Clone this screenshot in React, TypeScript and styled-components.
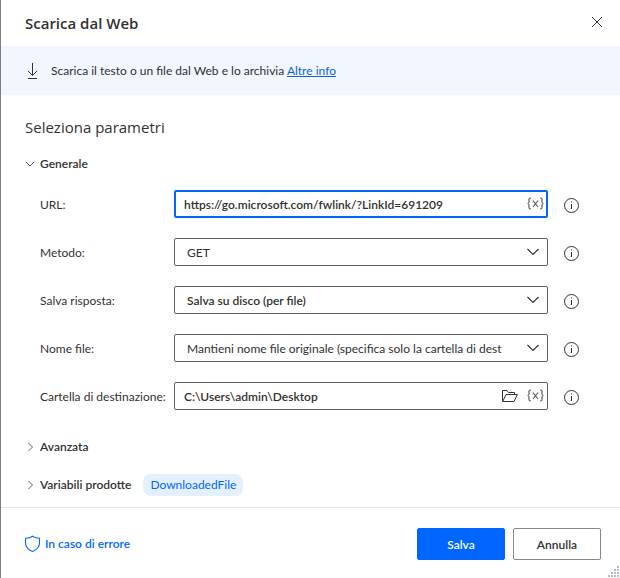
import React, { useState } from "react";
import styled, { createGlobalStyle, css } from "styled-components";

const colors = {
  text: "#323130",
  accent: "#0066ff",
  link: "#0f62e6",
  border: "#605e5c",
  banner: "#f1f6ff",
  pill: "#e5f0ff",
  divider: "#e6e6e6",
};

const headingFont = `"Open Sans", "Segoe UI", sans-serif`;

const GlobalStyle = createGlobalStyle`
  *, *::before, *::after { box-sizing: border-box; }
  body {
    margin: 0;
    background: #ffffff;
    color: ${colors.text};
    font: 12px/16px Lato, "Segoe UI", sans-serif;
  }
  button, input, select { font: inherit; color: inherit; }
`;

const Dialog = styled.main`
  position: relative;
  display: flex;
  flex-direction: column;
  min-height: 100vh;
  border-left: 1px solid #7f7f7f;
`;

const Header = styled.header`
  display: flex;
  align-items: center;
  justify-content: space-between;
  height: 46px;
  padding: 0 17px 2px 24px;
`;

const Title = styled.h1`
  margin: 0;
  padding-top: 2px;
  font-family: ${headingFont};
  font-size: 15px;
  line-height: 20px;
  font-weight: 600;
`;

const IconButton = styled.button`
  display: grid;
  place-items: center;
  flex: none;
  padding: 0;
  border: 0;
  background: none;
  cursor: pointer;
`;

const Banner = styled.div`
  display: flex;
  align-items: center;
  gap: 10px;
  height: 49px;
  padding: 0 24px;
  background: ${colors.banner};
`;

const BannerText = styled.p`
  margin: 0;
`;

const Link = styled.a`
  color: ${colors.link};
  text-decoration: underline;
`;

const Body = styled.section`
  flex: 1;
  padding: 20px 40px 3px 24px;
`;

const Heading = styled.h2`
  margin: 0;
  font-family: ${headingFont};
  font-size: 15px;
  line-height: 24px;
  font-weight: 400;
`;

const SectionToggle = styled.button`
  display: flex;
  align-items: center;
  gap: 5px;
  padding: 0;
  border: 0;
  background: none;
  font-weight: 600;
  cursor: pointer;
`;

const General = styled.div`
  padding-top: 17px;
`;

const Fields = styled.div`
  display: grid;
  gap: 20px;
  padding: 18px 0 18px 15px;
`;

const FieldRow = styled.div`
  display: grid;
  grid-template-columns: 134px 1fr 32px;
  align-items: center;
`;

const Label = styled.label`
  padding-top: 2px;
  white-space: nowrap;
`;

const InfoButton = styled(IconButton)`
  justify-self: end;
  padding-top: 2px;
`;

const Control = styled.div<{ $focused?: boolean }>`
  display: flex;
  align-items: center;
  gap: 8px;
  height: 28px;
  padding: 0 3px 0 9px;
  border: 1px solid ${colors.border};
  border-radius: 2px;
  ${({ $focused }) =>
    $focused &&
    css`
      padding: 0 2px 0 8px;
      border: 2px solid ${colors.accent};
    `}
`;

const TextInput = styled.input`
  flex: 1;
  min-width: 0;
  padding: 2px 0 0;
  border: 0;
  outline: 0;
  background: none;
  font-weight: 600;
`;

const SelectControl = styled.div`
  display: grid;
  align-items: center;
  height: 28px;
  border: 1px solid ${colors.border};
  border-radius: 2px;

  > * {
    grid-area: 1 / 1;
  }

  > svg {
    justify-self: end;
    margin-right: 8px;
    pointer-events: none;
  }
`;

const Select = styled.select<{ $strong?: boolean }>`
  width: 100%;
  min-width: 0;
  height: 26px;
  padding: 2px 40px 0 12px;
  border: 0;
  outline: 0;
  appearance: none;
  background: none;
  font-weight: ${({ $strong }) => ($strong ? 600 : 400)};
`;

const Collapsed = styled.div`
  display: flex;
  align-items: center;
  gap: 12px;
  height: 38px;
`;

const Pill = styled.button`
  height: 22px;
  padding: 0 7px;
  border: 0;
  border-radius: 8px;
  background: ${colors.pill};
  color: ${colors.accent};
`;

const Footer = styled.footer`
  display: flex;
  align-items: center;
  gap: 8px;
  height: 71px;
  padding: 2px 19px 0 24px;
  border-top: 1px solid ${colors.divider};
`;

const ErrorButton = styled.button`
  display: flex;
  align-items: center;
  gap: 4px;
  margin-right: auto;
  padding: 0;
  border: 0;
  background: none;
  color: ${colors.accent};
  font-weight: 600;
`;

const ActionButton = styled.button<{ $primary?: boolean }>`
  width: 88px;
  height: 32px;
  padding: 2px 0 0;
  border: 1px solid ${({ $primary }) => ($primary ? colors.accent : "#8a8886")};
  border-radius: 2px;
  background: ${({ $primary }) => ($primary ? colors.accent : "#ffffff")};
  color: ${({ $primary }) => ($primary ? "#ffffff" : colors.text)};
  font-weight: 600;
`;

const Grip = styled.svg`
  position: absolute;
  right: 0;
  bottom: 0;
`;

const CloseIcon = () => (
  <svg width="12" height="12" viewBox="0 0 12 12" fill="none" stroke={colors.text} aria-hidden>
    <path d="M1 1l10 10M11 1L1 11" />
  </svg>
);

const DownloadIcon = () => (
  <svg width="16" height="18" viewBox="0 0 16 18" fill="none" stroke={colors.text} aria-hidden>
    <path d="M7.500 1v12M3 9l4.500 4.500L12 9M3 16.500h9" />
  </svg>
);

const Chevron = ({ open }: { open?: boolean }) => (
  <svg width="10" height="10" viewBox="0 0 10 10" fill="none" stroke="#605e5c" aria-hidden>
    <path d={open ? "M1 3l4 4 4-4" : "M3.500 1l4 4-4 4"} />
  </svg>
);

const SelectChevron = () => (
  <svg width="12" height="8" viewBox="0 0 12 8" fill="none" stroke={colors.text} strokeWidth="1.1" aria-hidden>
    <path d="M.5 1L6 6.500 11.500 1" />
  </svg>
);

const InfoIcon = () => (
  <svg width="16" height="16" viewBox="0 0 16 16" fill="none" stroke={colors.text} aria-hidden>
    <circle cx="7.500" cy="8.500" r="7" />
    <path d="M7.500 7v5M7.500 4.500v1" />
  </svg>
);

const VariableIcon = () => (
  <svg width="18" height="14" viewBox="0 0 18 14" fill="none" stroke="#605e5c" strokeWidth="1.2" aria-hidden>
    <path d="M5 1H4.500q-1.500 0-1.500 1.500V5q0 1.500-1.500 1.500Q3 6.500 3 8v2.500Q3 12 4.500 12H5M14 1h.5Q16 1 16 2.500V5q0 1.500 1.500 1.500Q16 6.500 16 8v2.500q0 1.500-1.500 1.500H14M7 3.500l5 6.500M12 3.500L7 10" />
  </svg>
);

const FolderIcon = () => (
  <svg width="16" height="14" viewBox="0 0 16 14" fill="none" stroke={colors.text} aria-hidden>
    <path d="M.5 12.500v-11H5l1.500 2h6v2M.7 12.500L4 5.500h11.300L12 12.500z" />
  </svg>
);

const ShieldIcon = () => (
  <svg width="16" height="18" viewBox="0 0 16 18" fill="none" stroke={colors.accent} strokeWidth="1.1" aria-hidden>
    <path d="M7.500 1.200q2.600 2 7 2V8q0 5.500-7 8.500Q.5 13.500.5 8V3.200q4.400 0 7-2z" />
  </svg>
);

const ResizeGrip = () => (
  <Grip width="12" height="12" viewBox="0 0 12 12" fill="#b4b9c8" aria-hidden>
    {[0, 1, 2, 3].flatMap((row) =>
      Array.from({ length: row + 1 }, (_, i) => (
        <rect key={`${row}-${i}`} x={9 - i * 3} y={row * 3} width="2" height="2" />
      )),
    )}
  </Grip>
);

type FieldProps = { id: string; label: string; children: React.ReactNode };

const Field = ({ id, label, children }: FieldProps) => (
  <FieldRow>
    <Label htmlFor={id}>{label}</Label>
    {children}
    <InfoButton type="button" aria-label={`Info ${label}`}>
      <InfoIcon />
    </InfoButton>
  </FieldRow>
);

const VariableButton = () => (
  <IconButton type="button" aria-label="Seleziona variabile">
    <VariableIcon />
  </IconButton>
);

type SelectFieldProps = { id: string; label: string; value: string; strong?: boolean };

const SelectField = ({ id, label, value, strong }: SelectFieldProps) => (
  <Field id={id} label={label}>
    <SelectControl>
      <Select id={id} $strong={strong}>
        <option>{value}</option>
      </Select>
      <SelectChevron />
    </SelectControl>
  </Field>
);

export default function App() {
  const [url, setUrl] = useState("https://go.microsoft.com/fwlink/?LinkId=691209");
  const [folder, setFolder] = useState("C:\\Users\\admin\\Desktop");

  return (
    <Dialog>
      <GlobalStyle />
      <Header>
        <Title>Scarica dal Web</Title>
        <IconButton type="button" aria-label="Chiudi">
          <CloseIcon />
        </IconButton>
      </Header>
      <Banner>
        <DownloadIcon />
        <BannerText>
          Scarica il testo o un file dal Web e lo archivia <Link href="#info">Altre info</Link>
        </BannerText>
      </Banner>
      <Body>
        <Heading>Seleziona parametri</Heading>
        <General>
          <SectionToggle type="button" aria-expanded="true">
            <Chevron open />
            Generale
          </SectionToggle>
          <Fields>
            <Field id="url" label="URL:">
              <Control $focused>
                <TextInput id="url" value={url} onChange={(e) => setUrl(e.target.value)} />
                <VariableButton />
              </Control>
            </Field>
            <SelectField id="method" label="Metodo:" value="GET" />
            <SelectField id="save" label="Salva risposta:" value="Salva su disco (per file)" strong />
            <SelectField
              id="name"
              label="Nome file:"
              value="Mantieni nome file originale (specifica solo la cartella di dest"
            />
            <Field id="folder" label="Cartella di destinazione:">
              <Control>
                <TextInput id="folder" value={folder} onChange={(e) => setFolder(e.target.value)} />
                <IconButton type="button" aria-label="Sfoglia">
                  <FolderIcon />
                </IconButton>
                <VariableButton />
              </Control>
            </Field>
          </Fields>
        </General>
        <Collapsed>
          <SectionToggle type="button" aria-expanded="false">
            <Chevron />
            Avanzata
          </SectionToggle>
        </Collapsed>
        <Collapsed>
          <SectionToggle type="button" aria-expanded="false">
            <Chevron />
            Variabili prodotte
          </SectionToggle>
          <Pill type="button">DownloadedFile</Pill>
        </Collapsed>
      </Body>
      <Footer>
        <ErrorButton type="button">
          <ShieldIcon />
          In caso di errore
        </ErrorButton>
        <ActionButton type="button" $primary>
          Salva
        </ActionButton>
        <ActionButton type="button">Annulla</ActionButton>
      </Footer>
      <ResizeGrip />
    </Dialog>
  );
}
